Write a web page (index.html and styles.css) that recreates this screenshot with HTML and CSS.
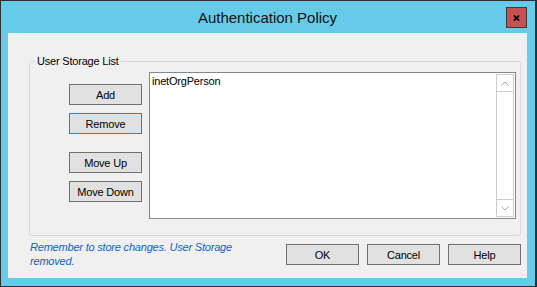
FILE: index.html
```html
<!DOCTYPE html>
<html lang="en">

<head>
    <meta charset="UTF-8">
    <meta name="viewport" content="width=device-width, initial-scale=1.0">
    <title>Authentication Policy</title>
    <link rel="stylesheet" href="styles.css">
</head>

<body>
    <div class="window">
        <div class="titlebar">
            <span></span>
            <div class="title">Authentication Policy</div>
            <button class="close-btn" title="Close">
                <svg width="7" height="6" viewBox="0 0 7 6">
                    <path d="M0.8 0.5 L6.2 5.5 M6.2 0.5 L0.8 5.5" stroke="#000" stroke-width="1.7" fill="none" />
                </svg>
            </button>
        </div>

        <div class="client">
            <fieldset class="group">
                <legend>User Storage List</legend>
                <div class="group-body">
                    <div class="side-buttons">
                        <button class="btn">Add</button>
                        <button class="btn focused">Remove</button>
                        <button class="btn spaced">Move Up</button>
                        <button class="btn">Move Down</button>
                    </div>
                    <div class="listbox">
                        <div class="list-items">
                            <div class="list-item">inetOrgPerson</div>
                        </div>
                        <div class="scrollbar">
                            <div class="arrow arrow-up">
                                <svg width="8" height="5" viewBox="0 0 8 5">
                                    <polyline points="0.5,4.5 4,1 7.5,4.5" fill="none" stroke="#a6a6a6" stroke-width="1" />
                                </svg>
                            </div>
                            <div class="track"></div>
                            <div class="arrow arrow-down">
                                <svg width="8" height="5" viewBox="0 0 8 5">
                                    <polyline points="0.5,0.5 4,4 7.5,0.5" fill="none" stroke="#a6a6a6" stroke-width="1" />
                                </svg>
                            </div>
                        </div>
                    </div>
                </div>
            </fieldset>

            <div class="footer">
                <p class="status">Remember to store changes. User Storage removed.</p>
                <div class="dialog-buttons">
                    <button class="btn">OK</button>
                    <button class="btn">Cancel</button>
                    <button class="btn">Help</button>
                </div>
            </div>
        </div>
    </div>
</body>

</html>
```

FILE: styles.css
```css
body {
    margin: 0;
    padding: 0;
    font-family: "Liberation Sans", Arial, sans-serif;
    font-size: 11px;
    letter-spacing: -0.2px;
    color: #000;
}

.window {
    box-sizing: border-box;
    width: 537px;
    height: 287px;
    border: 1px solid #2f2f2f;
    border-right-width: 2px;
    background-color: #65cbe9;
    /* blue frame */
    padding: 0 8px 8px 7px;
    display: flex;
    flex-direction: column;
}

.titlebar {
    height: 32px;
    display: grid;
    grid-template-columns: 1fr auto 1fr;
    align-items: start;
}

.titlebar .title {
    font-size: 15px;
    line-height: 17px;
    letter-spacing: 0;
    padding-top: 8px;
    color: #111;
}

.close-btn {
    justify-self: end;
    margin-top: 6px;
    width: 21px;
    height: 21px;
    padding: 0;
    border: 1px solid #3a3a3a;
    background-color: #c75050;
    display: flex;
    align-items: center;
    justify-content: center;
}

.client {
    flex: 1;
    background-color: #f0f0f0;
    padding: 0 6px 0 21px;
    display: flex;
    flex-direction: column;
}

.group {
    margin: 22px 0 0 0;
    padding: 0;
    border: 1px solid #d9d9d9;
    border-radius: 3px;
    min-width: 0;
}

.group legend {
    margin-left: 5px;
    padding: 0 2px;
    line-height: 13px;
}

.group-body {
    display: flex;
    gap: 7px;
    padding: 4px 4px 16px 39px;
}

.side-buttons {
    display: flex;
    flex-direction: column;
    gap: 8px;
    margin-top: 12px;
}

.btn {
    box-sizing: border-box;
    width: 73px;
    height: 21px;
    padding: 0;
    font: inherit;
    letter-spacing: inherit;
    color: #000;
    background-color: #e1e1e1;
    border: 1px solid #707070;
}

.btn.focused {
    border-color: #3c7fb1;
}

.btn.spaced {
    margin-top: 10px;
}

.listbox {
    flex: 1;
    height: 147px;
    box-sizing: border-box;
    border: 1px solid #828790;
    background-color: #fff;
    padding: 1px;
    display: flex;
}

.list-items {
    flex: 1;
    padding: 1px 1px;
}

.list-item {
    line-height: 13px;
}

.scrollbar {
    box-sizing: border-box;
    width: 18px;
    border: 1px solid #cdcdcd;
    display: flex;
    flex-direction: column;
}

.arrow {
    height: 16px;
    display: flex;
    align-items: center;
    justify-content: center;
}

.arrow-up {
    border-bottom: 1px solid #cdcdcd;
}

.arrow-down {
    border-top: 1px solid #cdcdcd;
}

.track {
    flex: 1;
}

.footer {
    display: flex;
    align-items: flex-start;
}

.status {
    width: 215px;
    margin: 4px 0 0 1px;
    font-style: italic;
    line-height: 14px;
    color: #0a64d2;
}

.dialog-buttons {
    margin-left: auto;
    margin-top: 8px;
    display: flex;
    gap: 8px;
}
```
